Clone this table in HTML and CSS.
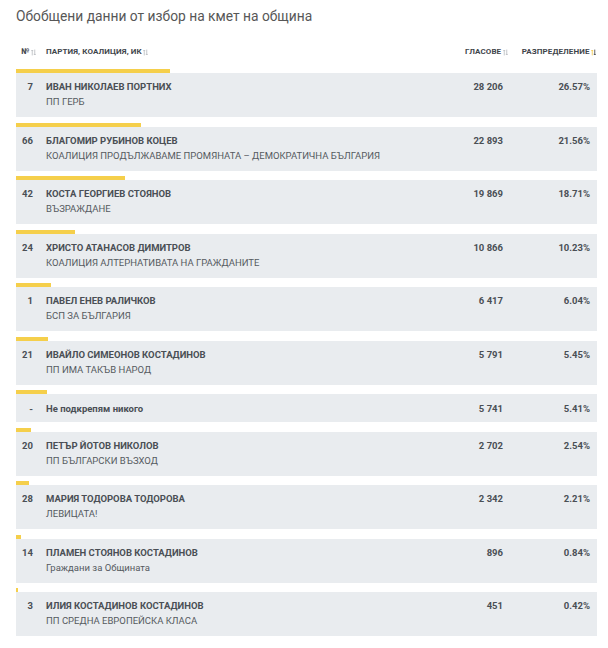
FILE: index.html
```html
<!DOCTYPE html>
<html lang="bg">
<head>
<meta charset="utf-8">
<title>Обобщени данни</title>
<link rel="stylesheet" href="styles.css">
</head>
<body>
<div class="page">
  <h1 class="title">Обобщени данни от избор на кмет на община</h1>
  <div class="head">
    <span class="h-num">№<svg class="sort" viewBox="0 0 6 8"><path d="M1.5 7.5V1M0.3 2.3L1.5 1 2.7 2.3" class="up"/><path d="M4.5 0.5V7M3.3 5.7L4.5 7 5.7 5.7" class="dn"/></svg></span>
    <span class="h-name">ПАРТИЯ, КОАЛИЦИЯ, ИК<svg class="sort" viewBox="0 0 6 8"><path d="M1.5 7.5V1M0.3 2.3L1.5 1 2.7 2.3" class="up"/><path d="M4.5 0.5V7M3.3 5.7L4.5 7 5.7 5.7" class="dn"/></svg></span>
    <span class="h-votes">ГЛАСОВЕ<svg class="sort" viewBox="0 0 6 8"><path d="M1.5 7.5V1M0.3 2.3L1.5 1 2.7 2.3" class="up"/><path d="M4.5 0.5V7M3.3 5.7L4.5 7 5.7 5.7" class="dn"/></svg></span>
    <span class="h-pct">РАЗПРЕДЕЛЕНИЕ<svg class="sort active" viewBox="0 0 6 8"><path d="M1.5 7.5V1M0.3 2.3L1.5 1 2.7 2.3" class="up"/><path d="M4.5 0.5V7M3.3 5.7L4.5 7 5.7 5.7" class="dn"/></svg></span>
  </div>
  <div class="rows">
    <div class="item"><div class="bar" style="width:26.57%"></div><div class="row"><span class="num">7</span><div class="who"><div class="name">ИВАН НИКОЛАЕВ ПОРТНИХ</div><div class="party">ПП ГЕРБ</div></div><span class="votes">28 206</span><span class="pct">26.57%</span></div></div>
    <div class="item"><div class="bar" style="width:21.56%"></div><div class="row"><span class="num">66</span><div class="who"><div class="name">БЛАГОМИР РУБИНОВ КОЦЕВ</div><div class="party">КОАЛИЦИЯ ПРОДЪЛЖАВАМЕ ПРОМЯНАТА – ДЕМОКРАТИЧНА БЪЛГАРИЯ</div></div><span class="votes">22 893</span><span class="pct">21.56%</span></div></div>
    <div class="item"><div class="bar" style="width:18.71%"></div><div class="row"><span class="num">42</span><div class="who"><div class="name">КОСТА ГЕОРГИЕВ СТОЯНОВ</div><div class="party">ВЪЗРАЖДАНЕ</div></div><span class="votes">19 869</span><span class="pct">18.71%</span></div></div>
    <div class="item"><div class="bar" style="width:10.23%"></div><div class="row"><span class="num">24</span><div class="who"><div class="name">ХРИСТО АТАНАСОВ ДИМИТРОВ</div><div class="party">КОАЛИЦИЯ АЛТЕРНАТИВАТА НА ГРАЖДАНИТЕ</div></div><span class="votes">10 866</span><span class="pct">10.23%</span></div></div>
    <div class="item"><div class="bar" style="width:6.04%"></div><div class="row"><span class="num">1</span><div class="who"><div class="name">ПАВЕЛ ЕНЕВ РАЛИЧКОВ</div><div class="party">БСП ЗА БЪЛГАРИЯ</div></div><span class="votes">6 417</span><span class="pct">6.04%</span></div></div>
    <div class="item"><div class="bar" style="width:5.45%"></div><div class="row"><span class="num">21</span><div class="who"><div class="name">ИВАЙЛО СИМЕОНОВ КОСТАДИНОВ</div><div class="party">ПП ИМА ТАКЪВ НАРОД</div></div><span class="votes">5 791</span><span class="pct">5.45%</span></div></div>
    <div class="item"><div class="bar" style="width:5.41%"></div><div class="row single"><span class="num">-</span><div class="who"><div class="name">Не подкрепям никого</div></div><span class="votes">5 741</span><span class="pct">5.41%</span></div></div>
    <div class="item"><div class="bar" style="width:2.54%"></div><div class="row"><span class="num">20</span><div class="who"><div class="name">ПЕТЪР ЙОТОВ НИКОЛОВ</div><div class="party">ПП БЪЛГАРСКИ ВЪЗХОД</div></div><span class="votes">2 702</span><span class="pct">2.54%</span></div></div>
    <div class="item"><div class="bar" style="width:2.21%"></div><div class="row"><span class="num">28</span><div class="who"><div class="name">МАРИЯ ТОДОРОВА ТОДОРОВА</div><div class="party">ЛЕВИЦАТА!</div></div><span class="votes">2 342</span><span class="pct">2.21%</span></div></div>
    <div class="item"><div class="bar" style="width:0.84%"></div><div class="row"><span class="num">14</span><div class="who"><div class="name">ПЛАМЕН СТОЯНОВ КОСТАДИНОВ</div><div class="party">Граждани за Общината</div></div><span class="votes">896</span><span class="pct">0.84%</span></div></div>
    <div class="item"><div class="bar" style="width:0.42%"></div><div class="row"><span class="num">3</span><div class="who"><div class="name">ИЛИЯ КОСТАДИНОВ КОСТАДИНОВ</div><div class="party">ПП СРЕДНА ЕВРОПЕЙСКА КЛАСА</div></div><span class="votes">451</span><span class="pct">0.42%</span></div></div>
  </div>
</div>
</body>
</html>
```

FILE: styles.css
```css
html, body {
  margin: 0;
  padding: 0;
  background: #ffffff;
}
body {
  font-family: "Roboto", "Liberation Sans", sans-serif;
  color: #4a4f55;
}
.page {
  padding: 6px 11px 0 16px;
}
.title {
  margin: 0;
  font-size: 13.8px;
  line-height: 20px;
  font-weight: 400;
  color: #575757;
}
.head {
  display: flex;
  align-items: center;
  margin-top: 21px;
  height: 10px;
  font-size: 8px;
  letter-spacing: 0.1px;
  line-height: 10px;
  font-weight: 700;
  color: #3f454b;
}
.head span {
  display: flex;
  align-items: center;
}
.h-num {
  margin-left: 5px;
  width: 25px;
}
.h-name {
  flex: 1;
}
.h-votes {
  margin-right: 14px;
}
.h-pct {
  margin-right: 1px;
}
.sort {
  width: 5px;
  height: 7px;
  margin-left: 1.5px;
  fill: none;
  stroke-width: 1;
}
.sort .up, .sort .dn {
  stroke: #b9bdc1;
}
.sort.active .up {
  stroke: #f2c94c;
}
.sort.active .dn {
  stroke: #3f454b;
}
.rows {
  margin-top: 12px;
  display: flex;
  flex-direction: column;
}
.item {
  margin-bottom: 5.5px;
}
.bar {
  height: 4px;
  background: #f5cf4b;
}
.row {
  display: grid;
  grid-template-columns: 17px 1fr 80px 87px;
  column-gap: 13px;
  align-items: start;
  background: #e9ecef;
  padding: 6px 7px 8px 0;
  font-size: 9.5px;
  line-height: 15px;
}
.row.single {
  padding-top: 7px;
  padding-bottom: 6px;
}
.num {
  text-align: right;
  font-weight: 700;
}
.name {
  font-weight: 700;
}
.party {
  font-weight: 400;
  color: #555a60;
}
.votes {
  grid-column: 3;
  text-align: right;
  font-weight: 700;
  margin-right: -13px;
}
.pct {
  text-align: right;
  font-weight: 700;
}
```
